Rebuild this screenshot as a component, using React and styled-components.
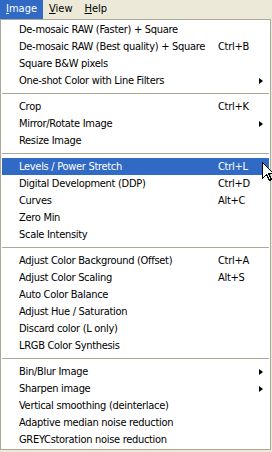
import React from "react";
import styled, { createGlobalStyle } from "styled-components";

const Global = createGlobalStyle`
  html, body { margin: 0; padding: 0; background: #ffffff; }
  body {
    font-family: "DejaVu Sans Condensed", "DejaVu Sans", Tahoma, sans-serif;
    font-size: 11px;
    color: #000;
  }
`;

const Screen = styled.div`
  position: relative;
  width: 272px;
  height: 452px;
  overflow: hidden;
  background: #ece9d8;
  display: flex;
  flex-direction: column;
`;

const MenuBar = styled.div`
  display: flex;
  height: 19px;
  flex-shrink: 0;
  background: #ece9d8;
`;

const BarItem = styled.div`
  padding: 0 6px;
  height: 19px;
  line-height: 18px;
  background: ${(p) => (p.$open ? "#316ac5" : "transparent")};
  color: ${(p) => (p.$open ? "#ffffff" : "#000000")};
  u { text-decoration: underline; text-underline-offset: 1px; }
`;

const Popup = styled.div`
  box-sizing: border-box;
  width: 271px;
  border: 1px solid #aca899;
  padding: 1px;
  background: #ffffff;
  display: flex;
  flex-direction: column;
`;

const Item = styled.div`
  display: flex;
  align-items: center;
  height: 17px;
  line-height: 17px;
  padding-left: 17px;
  white-space: nowrap;
  letter-spacing: -0.3px;
  background: ${(p) => (p.$active ? "#316ac5" : "transparent")};
  color: ${(p) => (p.$active ? "#ffffff" : "#000000")};
`;

const Label = styled.span`
  flex: 1;
  overflow: hidden;
`;

const Shortcut = styled.span`
  width: 34px;
  text-align: left;
`;

const ArrowCell = styled.span`
  width: 17px;
  display: flex;
  align-items: center;
  padding-left: 7px;
  box-sizing: border-box;
`;

const Arrow = styled.span`
  width: 0;
  height: 0;
  border-left: 4px solid ${(p) => (p.$active ? "#fff" : "#000")};
  border-top: 3.5px solid transparent;
  border-bottom: 3.5px solid transparent;
`;

const Separator = styled.div`
  height: 9px;
  display: flex;
  align-items: center;
  &::after {
    content: "";
    display: block;
    width: 100%;
    height: 1px;
    background: #aca899;
  }
`;

const Cursor = styled.svg`
  position: absolute;
  left: 262px;
  top: 162px;
`;

const groups = [
  [
    { label: "De-mosaic RAW (Faster) + Square" },
    { label: "De-mosaic RAW (Best quality) + Square", key: "Ctrl+B" },
    { label: "Square B&W pixels" },
    { label: "One-shot Color with Line Filters", sub: true },
  ],
  [
    { label: "Crop", key: "Ctrl+K" },
    { label: "Mirror/Rotate Image", sub: true },
    { label: "Resize Image" },
  ],
  [
    { label: "Levels / Power Stretch", key: "Ctrl+L", active: true },
    { label: "Digital Development (DDP)", key: "Ctrl+D" },
    { label: "Curves", key: "Alt+C" },
    { label: "Zero Min" },
    { label: "Scale Intensity" },
  ],
  [
    { label: "Adjust Color Background (Offset)", key: "Ctrl+A" },
    { label: "Adjust Color Scaling", key: "Alt+S" },
    { label: "Auto Color Balance" },
    { label: "Adjust Hue / Saturation" },
    { label: "Discard color (L only)" },
    { label: "LRGB Color Synthesis" },
  ],
  [
    { label: "Bin/Blur Image", sub: true },
    { label: "Sharpen image", sub: true },
    { label: "Vertical smoothing (deinterlace)" },
    { label: "Adaptive median noise reduction" },
    { label: "GREYCstoration noise reduction" },
  ],
];

export default function App() {
  return (
    <>
      <Global />
      <Screen>
        <MenuBar>
          <BarItem $open>
            <u>I</u>mage
          </BarItem>
          <BarItem>
            <u>V</u>iew
          </BarItem>
          <BarItem>
            <u>H</u>elp
          </BarItem>
        </MenuBar>
        <Popup>
          {groups.map((g, gi) => (
            <React.Fragment key={gi}>
              {gi > 0 && <Separator />}
              {g.map((it) => (
                <Item key={it.label} $active={it.active}>
                  <Label>{it.label}</Label>
                  <Shortcut>{it.key || ""}</Shortcut>
                  <ArrowCell>{it.sub && <Arrow $active={it.active} />}</ArrowCell>
                </Item>
              ))}
            </React.Fragment>
          ))}
        </Popup>
        <Cursor width="12" height="20" viewBox="0 0 12 20">
          <path
            d="M0.5 0.5 L0.5 16.5 L4.5 12.5 L7.5 18.5 L9.5 17.5 L6.5 11.5 L11.5 11.5 Z"
            fill="#ffffff"
            stroke="#000000"
            strokeWidth="1"
            shapeRendering="crispEdges"
          />
        </Cursor>
      </Screen>
    </>
  );
}
